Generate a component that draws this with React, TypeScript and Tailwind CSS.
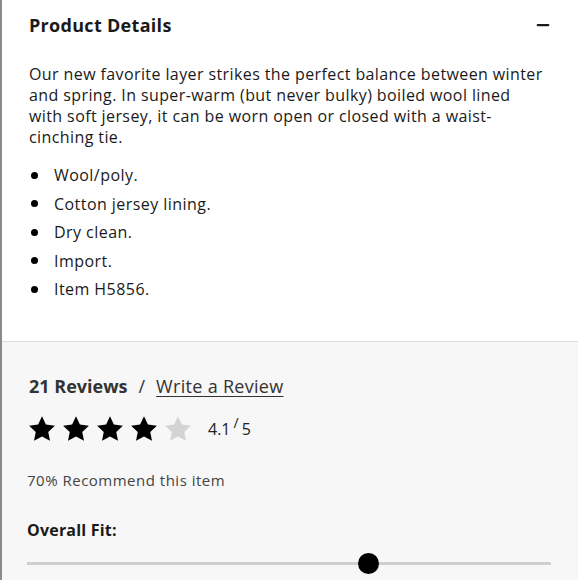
import { Minus } from "lucide-react";

const bullets = [
  "Wool/poly.",
  "Cotton jersey lining.",
  "Dry clean.",
  "Import.",
  "Item H5856.",
];

function Star({ filled }: { filled: boolean }) {
  return (
    <svg viewBox="0 0 24 24" className="h-[30px] w-[30px]">
      <path
        d="M12 1.8l3.1 6.6 7.2.9-5.3 5 1.4 7.1L12 17.9l-6.4 3.5 1.4-7.1-5.3-5 7.2-.9z"
        fill={filled ? "#000" : "#d4d4d4"}
      />
    </svg>
  );
}

export default function App() {
  return (
    <div className="h-[580px] w-[580px] overflow-hidden bg-white font-['Open_Sans',sans-serif] text-[#1a1a1a]">
      <div className="flex h-full w-[578px] flex-col border-l-2 border-[#8a8a8a]">
        <section className="pl-[27px] pr-[26px] pt-[12px]">
          <header className="flex items-center justify-between">
            <h2 className="text-[18px] font-bold leading-[26px] tracking-[0.3px]">Product Details</h2>
            <Minus className="h-[18px] w-[18px]" strokeWidth={3} />
          </header>
          <p className="mt-[26px] w-[517px] text-[16px] leading-[21px] tracking-[0.4px]">
            Our new favorite layer strikes the perfect balance between winter and spring. In
            super-warm (but never bulky) boiled wool lined with soft jersey, it can be worn
            open or closed with a waist-cinching tie.
          </p>
          <ul className="mt-[13px]">
            {bullets.map(item => (
              <li
                key={item}
                className="flex h-[28.5px] items-center text-[16px] tracking-[0.45px]"
              >
                <span className="ml-[2px] mr-[16px] h-[7px] w-[7px] rounded-full bg-black" />
                {item}
              </li>
            ))}
          </ul>
        </section>

        <section className="mt-[37px] flex-1 border-t border-[#dedede] bg-[#f7f7f7] pl-[25px] pr-[25px] pt-[31px]">
          <div className="flex items-center text-[18px] text-[#333]">
            <span className="ml-[2px] font-bold">21 Reviews</span>
            <span className="mx-[11px]">/</span>
            <a className="tracking-[0.3px] underline underline-offset-[3px]">Write a Review</a>
          </div>
          <div className="mt-[14px] flex items-center">
            <div className="flex gap-[4px]">
              <Star filled />
              <Star filled />
              <Star filled />
              <Star filled />
              <Star filled={false} />
            </div>
            <span className="ml-[15px] text-[16px] text-[#222]">
              4.1<sup className="mx-[3px] text-[14px]">/</sup>5
            </span>
          </div>
          <p className="mt-[25px] text-[15px] tracking-[0.5px] text-[#444]">
            70% Recommend this item
          </p>
          <h3 className="mt-[27px] text-[16px] font-bold tracking-[0.2px]">Overall Fit:</h3>
          <div className="relative mt-[20px] h-[3px] w-[524px] bg-[#cfcfcf]">
            <span className="absolute left-[331px] top-[-9px] h-[21px] w-[21px] rounded-full bg-black" />
          </div>
        </section>
      </div>
    </div>
  );
}
